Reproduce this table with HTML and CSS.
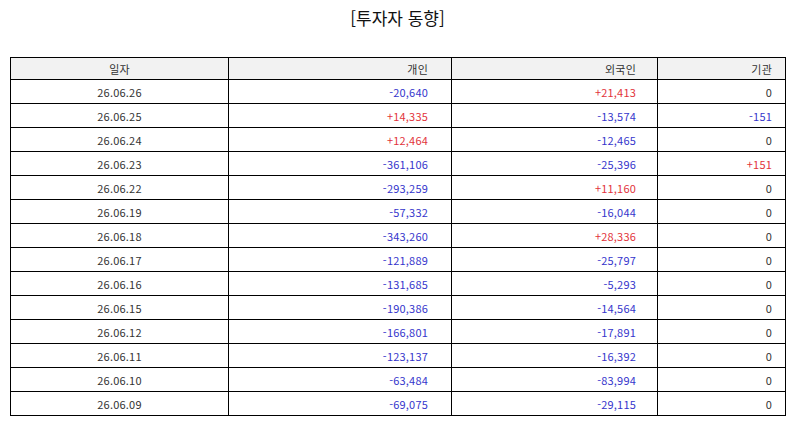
FILE: index.html
```html
<!DOCTYPE html>
<html lang="ko">
<head>
<meta charset="utf-8">
<title>투자자 동향</title>
<link rel="stylesheet" href="styles.css">
</head>
<body>
<div class="page">
  <h1 class="title">[투자자 동향]</h1>
  <table class="grid">
    <colgroup>
      <col class="c-date">
      <col class="c-ind">
      <col class="c-for">
      <col class="c-inst">
    </colgroup>
    <thead>
      <tr>
        <th class="date">일자</th>
        <th class="num">개인</th>
        <th class="num num-for">외국인</th>
        <th class="num num-inst">기관</th>
      </tr>
    </thead>
    <tbody>
      <tr><td class="date">26.06.26</td><td class="num down">-20,640</td><td class="num num-for up">+21,413</td><td class="num num-inst">0</td></tr>
      <tr><td class="date">26.06.25</td><td class="num up">+14,335</td><td class="num num-for down">-13,574</td><td class="num num-inst down">-151</td></tr>
      <tr><td class="date">26.06.24</td><td class="num up">+12,464</td><td class="num num-for down">-12,465</td><td class="num num-inst">0</td></tr>
      <tr><td class="date">26.06.23</td><td class="num down">-361,106</td><td class="num num-for down">-25,396</td><td class="num num-inst up">+151</td></tr>
      <tr><td class="date">26.06.22</td><td class="num down">-293,259</td><td class="num num-for up">+11,160</td><td class="num num-inst">0</td></tr>
      <tr><td class="date">26.06.19</td><td class="num down">-57,332</td><td class="num num-for down">-16,044</td><td class="num num-inst">0</td></tr>
      <tr><td class="date">26.06.18</td><td class="num down">-343,260</td><td class="num num-for up">+28,336</td><td class="num num-inst">0</td></tr>
      <tr><td class="date">26.06.17</td><td class="num down">-121,889</td><td class="num num-for down">-25,797</td><td class="num num-inst">0</td></tr>
      <tr><td class="date">26.06.16</td><td class="num down">-131,685</td><td class="num num-for down">-5,293</td><td class="num num-inst">0</td></tr>
      <tr><td class="date">26.06.15</td><td class="num down">-190,386</td><td class="num num-for down">-14,564</td><td class="num num-inst">0</td></tr>
      <tr><td class="date">26.06.12</td><td class="num down">-166,801</td><td class="num num-for down">-17,891</td><td class="num num-inst">0</td></tr>
      <tr><td class="date">26.06.11</td><td class="num down">-123,137</td><td class="num num-for down">-16,392</td><td class="num num-inst">0</td></tr>
      <tr><td class="date">26.06.10</td><td class="num down">-63,484</td><td class="num num-for down">-83,994</td><td class="num num-inst">0</td></tr>
      <tr><td class="date">26.06.09</td><td class="num down">-69,075</td><td class="num num-for down">-29,115</td><td class="num num-inst">0</td></tr>
    </tbody>
  </table>
</div>
</body>
</html>
```

FILE: styles.css
```css
html, body {
  margin: 0;
  padding: 0;
  background: #ffffff;
}

.page {
  padding: 0 10px;
  font-family: "Noto Sans CJK KR", "Noto Sans", sans-serif;
  color: #222;
}

.title {
  margin: 0;
  padding-top: 7px;
  height: 22px;
  line-height: 22px;
  font-size: 17px;
  font-weight: normal;
  text-align: center;
  color: #111;
}

.grid {
  margin-top: 28px;
  width: 775px;
  border-collapse: collapse;
  table-layout: fixed;
  font-size: 11px;
  letter-spacing: 0.2px;
}

.c-date { width: 218px; }
.c-ind { width: 223px; }
.c-for { width: 206px; }
.c-inst { width: 128px; }

.grid th,
.grid td {
  border: 1px solid #000;
  height: 23px;
  padding: 0;
  line-height: 14px;
  font-weight: normal;
  color: #333;
  white-space: nowrap;
}

.grid thead th {
  background: #f2f2f2;
  height: 21px;
}

.grid .date {
  text-align: center;
}

.grid .num {
  text-align: right;
  padding-right: 23px;
}

.grid .num-for {
  padding-right: 21px;
}

.grid .num-inst {
  padding-right: 13px;
}

.grid .up {
  color: #e2333b;
}

.grid .down {
  color: #3535cc;
}
```
